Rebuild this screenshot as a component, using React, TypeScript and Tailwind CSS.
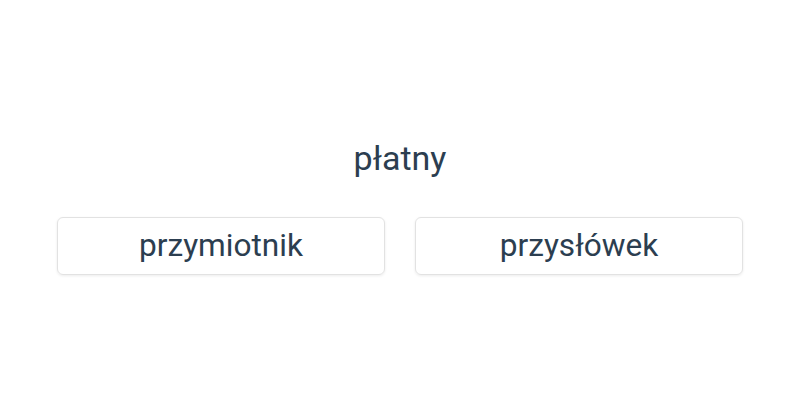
export default function App() {
  return (
    <div className="w-[800px] h-[400px] bg-white flex flex-col items-center" style={{ fontFamily: "Roboto, sans-serif" }}>
      <div className="mt-[136px] text-[34px] leading-[44px] text-[#2c3e50]">płatny</div>
      <div className="mt-[37px] w-full px-[57px] grid grid-cols-2 gap-[30px]">
        <div className="h-[58px] rounded-[6px] border border-[#e2e2e2] shadow-[0_1px_3px_rgba(0,0,0,0.08)] flex items-center justify-center text-[31.6px] text-[#2c3e50]">przymiotnik</div>
        <div className="h-[58px] rounded-[6px] border border-[#e2e2e2] shadow-[0_1px_3px_rgba(0,0,0,0.08)] flex items-center justify-center text-[31.6px] text-[#2c3e50]">przysłówek</div>
      </div>
    </div>
  );
}
